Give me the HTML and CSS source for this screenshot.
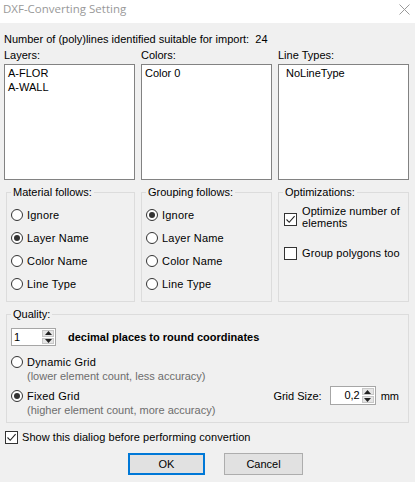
FILE: index.html
```html
<!DOCTYPE html>
<html>
<head>
<meta charset="utf-8">
<link rel="stylesheet" href="styles.css">
</head>
<body>
<div class="window">
  <div class="titlebar">
    <span class="title">DXF-Converting Setting</span>
    <svg class="close" width="11" height="11" viewBox="0 0 11 11"><path d="M0.5 0.5 L10.5 10.5 M10.5 0.5 L0.5 10.5" stroke="#9a9a9a" stroke-width="1" fill="none"/></svg>
  </div>
  <div class="content">
    <p class="info">Number of (poly)lines identified suitable for import:&nbsp; 24</p>
    <div class="cols labels"><span>Layers:</span><span>Colors:</span><span>Line Types:</span></div>
    <div class="cols lists">
      <ul class="listbox"><li>A-FLOR</li><li>A-WALL</li></ul>
      <ul class="listbox"><li>Color 0</li></ul>
      <ul class="listbox"><li class="indent">NoLineType</li></ul>
    </div>
    <div class="groups">
      <fieldset class="group">
        <legend>Material follows:</legend>
        <div class="opts">
          <div class="opt"><span class="radio"></span>Ignore</div>
          <div class="opt"><span class="radio on"></span>Layer Name</div>
          <div class="opt"><span class="radio"></span>Color Name</div>
          <div class="opt"><span class="radio"></span>Line Type</div>
        </div>
      </fieldset>
      <fieldset class="group">
        <legend>Grouping follows:</legend>
        <div class="opts">
          <div class="opt"><span class="radio on"></span>Ignore</div>
          <div class="opt"><span class="radio"></span>Layer Name</div>
          <div class="opt"><span class="radio"></span>Color Name</div>
          <div class="opt"><span class="radio"></span>Line Type</div>
        </div>
      </fieldset>
      <fieldset class="group">
        <legend>Optimizations:</legend>
        <div class="checks">
          <div class="chk multi"><span class="box"><svg width="11" height="11" viewBox="0 0 11 11"><path d="M1.5 5.5 L4.2 8.3 L9.6 2.2" stroke="#222" stroke-width="1.1" fill="none"/></svg></span><span class="cap">Optimize number of elements</span></div>
          <div class="chk second"><span class="box"></span><span class="cap">Group polygons too</span></div>
        </div>
      </fieldset>
    </div>
    <fieldset class="quality">
      <legend>Quality:</legend>
      <div class="spinrow">
        <div class="spin">
          <span class="val">1</span>
          <span class="arrows">
            <span class="arr"><svg width="7" height="4" viewBox="0 0 7 4"><path d="M0 4 L3.5 0 L7 4 Z" fill="#222"/></svg></span>
            <span class="arr"><svg width="7" height="4" viewBox="0 0 7 4"><path d="M0 0 L3.5 4 L7 0 Z" fill="#222"/></svg></span>
          </span>
        </div>
        <b class="decimal">decimal places to round coordinates</b>
      </div>
      <div class="opt row"><span class="radio"></span>Dynamic Grid</div>
      <div class="sub">(lower element count, less accuracy)</div>
      <div class="opt row fixed">
        <span class="radio on"></span>Fixed Grid
        <span class="gridsize">
          <span class="glabel">Grid Size:</span>
          <span class="gbox">
            <span class="gval">0,2</span>
            <span class="arrows">
              <span class="arr"><svg width="7" height="4" viewBox="0 0 7 4"><path d="M0 4 L3.5 0 L7 4 Z" fill="#222"/></svg></span>
              <span class="arr"><svg width="7" height="4" viewBox="0 0 7 4"><path d="M0 0 L3.5 4 L7 0 Z" fill="#222"/></svg></span>
            </span>
          </span>
          <span class="mm">mm</span>
        </span>
      </div>
      <div class="sub sub2">(higher element count, more accuracy)</div>
    </fieldset>
    <div class="chk show"><span class="box"><svg width="11" height="11" viewBox="0 0 11 11"><path d="M1.5 5.5 L4.2 8.3 L9.6 2.2" stroke="#222" stroke-width="1.1" fill="none"/></svg></span><span class="cap">Show this dialiog before performing convertion</span></div>
    <div class="buttons">
      <button class="btn ok">OK</button>
      <button class="btn cancel">Cancel</button>
    </div>
  </div>
</div>
</body>
</html>
```
FILE: styles.css
```css
html, body {
  margin: 0;
  padding: 0;
  background: #f0f0f0;
}
body {
  font-family: "Liberation Sans", Arial, sans-serif;
  font-size: 11px;
  color: #000;
}
.window {
  width: 415px;
  height: 482px;
  overflow: hidden;
  background: #f0f0f0;
}
.titlebar {
  height: 23px;
  background: #fff;
  display: flex;
  align-items: flex-start;
  justify-content: space-between;
  padding: 0 5px 0 3px;
  box-sizing: border-box;
}
.title {
  font-family: "Open Sans", "Noto Sans", sans-serif;
  font-size: 11.5px;
  line-height: 18px;
  color: #999;
}
.close {
  margin-top: 4px;
  display: block;
}
.content {
  padding: 0 6px 0 4px;
}
.info {
  margin: 9px 0 0;
  line-height: 14px;
}
.cols {
  display: grid;
  grid-template-columns: 131px 131px 131px;
  column-gap: 6px;
}
.labels {
  margin-top: 2px;
  line-height: 14px;
}
.lists {
  margin-top: 2px;
}
.listbox {
  margin: 0;
  padding: 1px 3px;
  list-style: none;
  height: 116px;
  box-sizing: border-box;
  background: #fff;
  border: 1px solid #828282;
  line-height: 14px;
}
.listbox .indent {
  padding-left: 4px;
}
.groups {
  display: grid;
  grid-template-columns: 129px 131px 131px;
  column-gap: 6px;
  margin-top: 5px;
  padding-left: 2px;
}
fieldset {
  margin: 0;
  padding: 0 0 0 4px;
  border: 1px solid #dcdcdc;
  box-sizing: border-box;
  min-width: 0;
}
legend {
  padding: 0 2px;
  line-height: 14px;
}
.group {
  height: 117px;
}
.opts {
  padding-top: 4px;
}
.opt {
  height: 23px;
  display: flex;
  align-items: center;
  gap: 4px;
  letter-spacing: 0.2px;
}
.radio {
  width: 12px;
  height: 12px;
  box-sizing: border-box;
  border: 1px solid #333;
  border-radius: 50%;
  background: #fff;
  display: flex;
  align-items: center;
  justify-content: center;
  flex: none;
}
.radio.on::after {
  content: "";
  width: 6px;
  height: 6px;
  border-radius: 50%;
  background: #333;
}
.checks {
  padding-top: 6px;
}
.chk {
  display: flex;
  gap: 5px;
}
.box {
  width: 13px;
  height: 13px;
  box-sizing: border-box;
  border: 1px solid #333;
  background: #fff;
  flex: none;
  display: flex;
  align-items: center;
  justify-content: center;
}
.chk.multi {
  align-items: flex-start;
  line-height: 12px;
  margin-left: 1px;
  letter-spacing: 0.1px;
}
.chk.multi .box {
  margin-top: 8px;
}
.chk.second {
  margin-top: 17px;
  height: 14px;
  align-items: center;
  margin-left: 1px;
  letter-spacing: 0.1px;
}
.quality {
  margin: 5px 0 0 2px;
  width: 403px;
  height: 116px;
}
.spinrow {
  margin-top: 7px;
  display: flex;
  align-items: center;
  gap: 12px;
}
.spin {
  width: 45px;
  height: 18px;
  box-sizing: border-box;
  border: 1px solid #a6a6a6;
  background: #fff;
  display: flex;
  align-items: stretch;
}
.val {
  flex: 1;
  padding-left: 2px;
  line-height: 16px;
}
.arrows {
  width: 13px;
  display: flex;
  flex-direction: column;
  gap: 1px;
  padding: 1px 1px 1px 0;
  box-sizing: border-box;
}
.arr {
  flex: 1;
  background: #e5e5e5;
  border: 1px solid #c8c8c8;
  display: flex;
  align-items: center;
  justify-content: center;
}
.arr svg {
  display: block;
}
.decimal {
  font-weight: bold;
}
.opt.row {
  height: 14px;
  margin-top: 9px;
}
.sub {
  height: 14px;
  line-height: 14px;
  padding-left: 16px;
  color: #6d6d6d;
}
.opt.fixed {
  height: 19px;
  margin-top: 3px;
}
.sub2 {
  margin-top: -2px;
}
.gridsize {
  margin-left: auto;
  margin-right: 9px;
  display: flex;
  align-items: center;
  letter-spacing: 0;
}
.glabel {
  margin-right: 8px;
}
.gbox {
  width: 46px;
  height: 19px;
  box-sizing: border-box;
  border: 1px solid #a6a6a6;
  background: #fff;
  display: flex;
  align-items: stretch;
}
.gval {
  flex: 1;
  text-align: right;
  padding-right: 2px;
  line-height: 17px;
}
.mm {
  margin-left: 5px;
}
.chk.show {
  margin-top: 7px;
  height: 14px;
  align-items: center;
  margin-left: 1px;
  gap: 4px;
  letter-spacing: 0.05px;
}
.buttons {
  margin-top: 9px;
  display: flex;
  gap: 19px;
  padding-left: 124px;
}
.btn {
  font-family: "Liberation Sans", Arial, sans-serif;
  font-size: 11px;
  color: #000;
  height: 22px;
  background: #e1e1e1;
  box-sizing: border-box;
  padding: 0;
  margin: 0;
}
.ok {
  width: 77px;
  border: 2px solid #0078d7;
}
.cancel {
  width: 79px;
  border: 1px solid #adadad;
}
```
